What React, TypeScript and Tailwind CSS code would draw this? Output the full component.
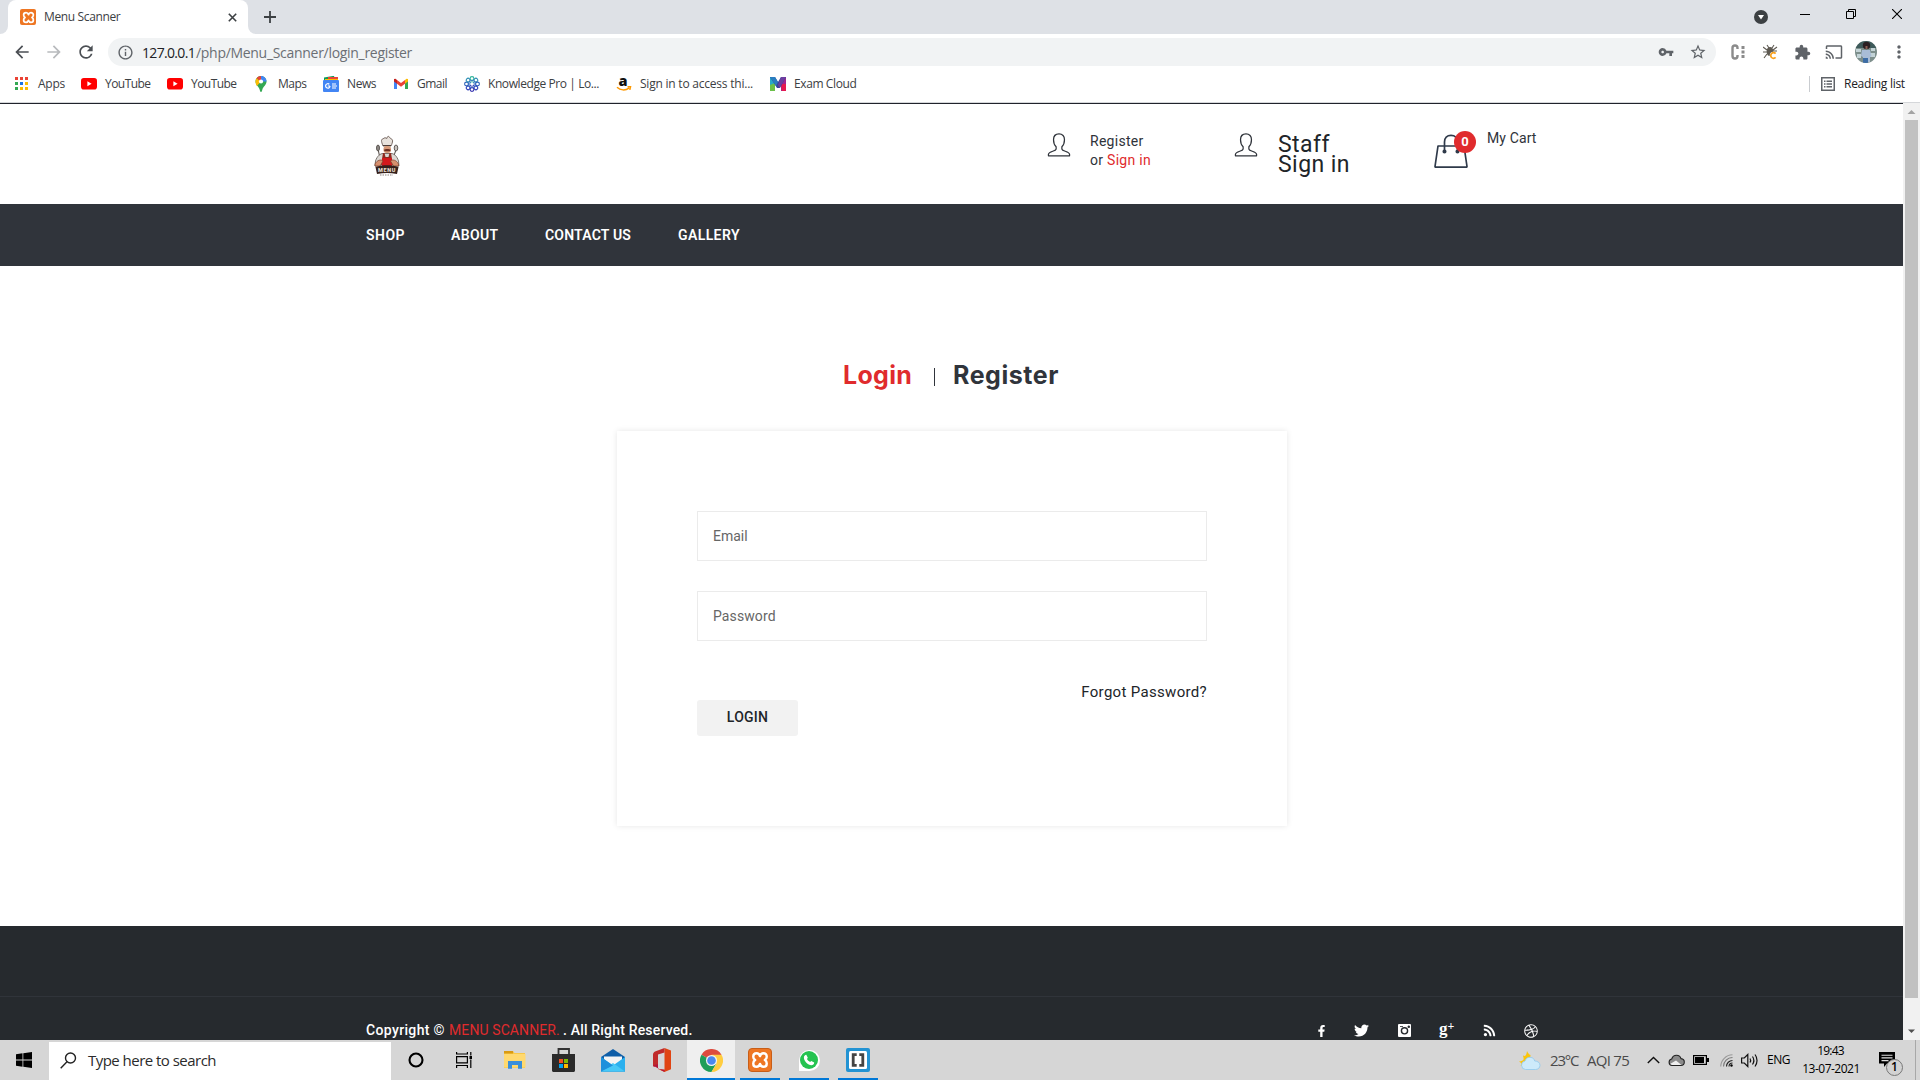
import type { ReactNode } from 'react';
import { FaFacebookF, FaTwitter, FaRss, FaDribbble } from 'react-icons/fa';
import { MdVpnKey, MdStarBorder, MdExtension, MdCast, MdArrowBack, MdArrowForward, MdRefresh, MdInfoOutline, MdMoreVert } from 'react-icons/md';

/* ---------- browser icons ---------- */

function XamppIcon({ className, glyph }: { className: string; glyph: string }) {
  return (
    <span className={`flex shrink-0 items-center justify-center bg-[#ee7623] ${className}`}>
      <svg viewBox="0 0 24 24" className={glyph} fill="none" stroke="#fff" strokeWidth="3.2" strokeLinejoin="round">
        <path d="M12 6.800C11.200 4.200 9.700 3 7.500 3 4.700 3 3 4.900 3 7.500c0 2 .9 3.500 2.600 4.500C3.900 13 3 14.500 3 16.500 3 19.100 4.700 21 7.500 21c2.200 0 3.700-1.200 4.500-3.800.8 2.600 2.300 3.800 4.500 3.800 2.800 0 4.500-1.900 4.500-4.500 0-2-.9-3.500-2.600-4.500C20.100 11 21 9.500 21 7.500 21 4.900 19.300 3 16.500 3c-2.200 0-3.700 1.200-4.500 3.800Z" />
      </svg>
    </span>
  );
}

function AppsIcon() {
  const colors = ['#ea4335', '#ea4335', '#ea4335', '#34a853', '#1a73e8', '#fbbc04', '#34a853', '#fbbc04', '#fbbc04'];
  return (
    <svg width="16" height="16" viewBox="0 0 16 16">
      {colors.map((c, i) => (
        <rect key={i} x={(i % 3) * 5} y={1 + Math.floor(i / 3) * 5} width="3" height="3" fill={c} />
      ))}
    </svg>
  );
}

function YouTubeIcon() {
  return (
    <svg width="16" height="16" viewBox="0 0 16 16">
      <rect y="2" width="16" height="11.500" rx="2.800" fill="#f00" />
      <path d="M6.400 5.300v5l4.200-2.500z" fill="#fff" />
    </svg>
  );
}

function MapsIcon() {
  return (
    <svg width="16" height="16" viewBox="0 0 16 16">
      <path d="M8 0C4.700 0 2.500 2.500 2.500 5.500c0 3.500 3.300 4.800 4.200 8.200.3 1 .4 2.300 1.300 2.300s1-1.300 1.300-2.300c.9-3.400 4.200-4.700 4.200-8.200C13.500 2.500 11.300 0 8 0z" fill="#34a853" />
      <path d="M8 0c3.300 0 5.500 2.500 5.500 5.500L8 5.500z" fill="#4285f4" />
      <path d="M3.600 2.200 8 5.500 3.900 9.900C3 8.600 2.500 7.200 2.500 5.500c0-1.300.4-2.400 1.100-3.300z" fill="#fbbc04" />
      <path d="M3.600 2.200C4.600.8 6.200 0 8 0v5.500z" fill="#ea4335" />
      <circle cx="8" cy="5.500" r="2.100" fill="#fff" />
    </svg>
  );
}

function NewsIcon() {
  return (
    <svg width="16" height="16" viewBox="0 0 16 16">
      <path d="M1 1.500 11-.2l1 5H1z" fill="#0c9d58" />
      <path d="M5 1h10v5H5z" fill="#ea4335" />
      <path d="M2 3h13v3H2z" fill="#fbbc04" />
      <rect y="4" width="16" height="12" rx="1" fill="#4285f4" />
      <path d="M7 10H4.800M7 10a2.200 2.200 0 1 1-.7-1.700M9 8h4M9 10h5M9 12h4" stroke="#fff" strokeWidth="1.200" fill="none" />
    </svg>
  );
}

function GmailIcon() {
  return (
    <svg width="16" height="16" viewBox="0 0 16 16">
      <path d="M1 3.500V13h3V6.500z" fill="#4285f4" />
      <path d="M15 3.500V13h-3V6.500z" fill="#34a853" />
      <path d="M1 3v2.500l3 2.300V4L2.500 2.700z" fill="#c5221f" />
      <path d="M15 3v2.500l-3 2.300V4l1.500-1.300z" fill="#fbbc04" />
      <path d="M4 4 8 7.100 12 4v3.800l-4 3-4-3z" fill="#ea4335" />
    </svg>
  );
}

function KnowledgeIcon() {
  return (
    <svg width="16" height="16" viewBox="0 0 16 16" fill="none" strokeWidth="1.100">
      {[0, 45, 90, 135, 180, 225, 270, 315].map((a, i) => (
        <g key={a} transform={`rotate(${a} 8 8)`} stroke={['#2fb39b', '#2e8fb5', '#2d62bb', '#2c3fb8', '#3531b0', '#2c3fb8', '#2d62bb', '#2e8fb5'][i]}>
          <circle cx="8" cy="2.500" r="1.900" />
          <path d="M8 4.500v2" />
        </g>
      ))}
      <circle cx="8" cy="8" r="3.600" stroke="#3a6fc4" strokeWidth=".8" />
    </svg>
  );
}

function AmazonIcon() {
  return (
    <svg width="16" height="16" viewBox="0 0 16 16">
      <text x="7" y="9.500" textAnchor="middle" fontFamily="Open Sans" fontWeight="800" fontSize="14.500" fill="#111">a</text>
      <path d="M1 11.300c3.500 3.300 8.500 3.300 12 .8M11.500 10.800h3l-.7 3" fill="none" stroke="#f90" strokeWidth="1.500" />
    </svg>
  );
}

function ExamIcon() {
  return (
    <svg width="16" height="16" viewBox="0 0 16 16">
      <path d="M0 1h5v14H0z" fill="#27a9c9" />
      <path d="M0 9 5 7v8H0z" fill="#6cc04a" />
      <path d="M11 1h5v14h-5z" fill="#a3238e" />
      <path d="M11 8h5v7h-4z" fill="#e5194f" />
      <path d="M0 1h5l3 5 3-5h5l-6 11H7z" fill="#34479c" />
      <path d="M0 1h5l3 5-2 4z" fill="#2a7dc0" />
      <path d="M16 1 9.500 12 8 9l3-8z" fill="#6b3fa0" />
    </svg>
  );
}

const bookmarks: { icon: ReactNode; label: string; cls: string }[] = [
  { icon: <AppsIcon />, label: 'Apps', cls: 'w-[28px] ml-[7px] mr-[15px] tracking-[-0.25px]' },
  { icon: <YouTubeIcon />, label: 'YouTube', cls: 'w-[47px] ml-2 mr-[15px] tracking-[-0.55px]' },
  { icon: <YouTubeIcon />, label: 'YouTube', cls: 'w-[47px] ml-2 mr-[15px] tracking-[-0.55px]' },
  { icon: <MapsIcon />, label: 'Maps', cls: 'w-[30px] ml-[9px] mr-[15px] tracking-[-0.5px]' },
  { icon: <NewsIcon />, label: 'News', cls: 'w-[31px] ml-2 mr-[15px] tracking-[-0.4px]' },
  { icon: <GmailIcon />, label: 'Gmail', cls: 'w-[32px] ml-2 mr-[15px] tracking-[-0.5px]' },
  { icon: <KnowledgeIcon />, label: 'Knowledge Pro | Lo...', cls: 'w-[113px] ml-2 mr-[15px] tracking-[-0.42px]' },
  { icon: <AmazonIcon />, label: 'Sign in to access thi...', cls: 'w-[115px] ml-2 mr-[15px] tracking-[-0.22px]' },
  { icon: <ExamIcon />, label: 'Exam Cloud', cls: 'w-[64px] ml-2 tracking-[-0.4px]' },
];

function TabStrip() {
  return (
    <div className="flex h-[34px] shrink-0 bg-[#dee1e6]">
      <div className="flex w-2 items-end bg-white">
        <div className="h-full w-full rounded-br-lg bg-[#dee1e6]" />
      </div>
      <div className="w-[240px] bg-[#dee1e6]">
        <div className="flex h-full items-center rounded-t-lg bg-white pl-3">
          <XamppIcon className="size-4 rounded-[2px]" glyph="size-[13px]" />
          <span className="ml-2 w-[184px] text-[12px] tracking-[-0.36px] text-[#3c4043]">Menu Scanner</span>
          <svg width="9" height="9" viewBox="0 0 9 9" stroke="#3c4043" strokeWidth="1.600"><path d="M.8.8l7.400 7.400M8.200.8.8 8.200" /></svg>
        </div>
      </div>
      <div className="w-2 bg-white">
        <div className="h-full w-full rounded-bl-lg bg-[#dee1e6]" />
      </div>
      <div className="flex items-center pl-2">
        <svg width="12" height="12" viewBox="0 0 12 12" stroke="#3c4043" strokeWidth="1.800"><path d="M6 0v12M0 6h12" /></svg>
      </div>
      <div className="ml-auto flex items-start">
        <svg className="mt-[10px] mr-[32px]" width="14" height="14" viewBox="0 0 14 14"><circle cx="7" cy="7" r="7" fill="#3c4043" /><path d="M4 5h6l-3 4.500z" fill="#fff" /></svg>
        <svg className="mt-[9px] mr-[36px]" width="10" height="11" viewBox="0 0 10 11" stroke="#000"><path d="M0 5.500h10" /></svg>
        <svg className="mt-[9px] mr-[36px]" width="10" height="10" viewBox="0 0 10 10" stroke="#000" fill="none"><path d="M.5 2.500h7v7h-7zM2.500 2.500v-2h7v7h-2" /></svg>
        <svg className="mt-[9px] mr-[18px]" width="10" height="10" viewBox="0 0 10 10" stroke="#000" strokeWidth="1.100"><path d="M0 0l10 10M10 0 0 10" /></svg>
      </div>
    </div>
  );
}

function Toolbar() {
  return (
    <div className="flex h-9 shrink-0 items-center bg-white pl-[12px] text-[#5f6368]">
      <MdArrowBack className="size-[20px] text-[#4b4f54]" />
      <MdArrowForward className="ml-[12px] size-[20px] text-[#b8babd]" />
      <MdRefresh className="ml-[12px] size-[20px] text-[#4b4f54]" />
      <div className="ml-[12px] flex h-7 w-[1608px] items-center rounded-full bg-[#f1f3f4] pr-[9px] pl-[9px] text-[14px]">
        <MdInfoOutline className="size-[17px]" />
        <span className="ml-2 w-[54px] tracking-[-0.67px] text-[#202124]">127.0.0.1</span>
        <span className="tracking-[-0.3px] text-[#6b6f74]">/php/Menu_Scanner/login_register</span>
        <MdVpnKey className="ml-auto size-[16px]" />
        <MdStarBorder className="ml-[15px] size-[18px]" />
      </div>
      <svg className="ml-[14px]" width="15" height="16" viewBox="0 0 15 16">
        <path d="M7.500 5V4a2.500 2.500 0 0 0-5 0v8a2.500 2.500 0 0 0 5 0v-1" fill="none" stroke="#8b8b8b" strokeWidth="2.400" />
        <path d="M11.500 2h3v3h-3zM11.500 6.500h3v3h-3zM11.500 11h3v3h-3z" fill="#8b8b8b" />
      </svg>
      <svg className="ml-[18px]" width="16" height="16" viewBox="0 0 16 16">
        <path d="M4 1l2 3M11 1 9 4M0 3l4 3M14 3l-4 3M0 8h4M1 14l3-4M14 7h-4" stroke="#5e5a52" strokeWidth="1.100" />
        <ellipse cx="7" cy="7.500" rx="3.300" ry="4.500" fill="#5e5a52" />
        <circle cx="10.500" cy="11.500" r="3.800" fill="#fff" />
        <path d="M12.600 9.600a2.800 2.800 0 1 0 0 3.800" fill="none" stroke="#f9a01b" strokeWidth="1.700" />
      </svg>
      <MdExtension className="ml-[15px] size-[17px]" />
      <MdCast className="ml-[14px] size-[18px]" />
      <svg className="ml-[12px]" width="22" height="22" viewBox="0 0 22 22">
        <clipPath id="avatar"><circle cx="11" cy="11" r="11" /></clipPath>
        <g clipPath="url(#avatar)">
          <rect width="22" height="22" fill="#7d8f8c" />
          <path d="M0 0h22v7H0z" fill="#3e5a5a" />
          <path d="M1 8h5v3H1zM2 13h4v4H2zM16 7h4v3h-4zM15 12h5v4h-5z" fill="#c3d3d6" />
          <path d="M7 9h8l1.500 6-1.500 1v5H8v-5l-2-1z" fill="#a9bdd6" />
          <path d="M8 17h5v5H8z" fill="#3d6da5" />
          <circle cx="11.500" cy="4.500" r="3.700" fill="#2b1f22" />
          <path d="M10.500 5h2v3h-2z" fill="#8d5f52" />
        </g>
      </svg>
      <MdMoreVert className="ml-[12px] size-[20px]" />
    </div>
  );
}

function BookmarksBar() {
  return (
    <div className="flex h-8 shrink-0 items-start bg-white pt-1 pl-[15px] text-[12px] leading-5 whitespace-nowrap text-[#3c4043]">
      {bookmarks.map((b, i) => (
        <div key={i} className="flex items-center">
          <span className="flex h-5 w-4 shrink-0 items-center">{b.icon}</span>
          <span className={`block ${b.cls}`}>{b.label}</span>
        </div>
      ))}
      <div className="ml-auto flex h-5 items-center pr-[15px]">
        <div className="h-4 w-px bg-[#c9ccd0]" />
        <svg className="ml-[11px]" width="14" height="14" viewBox="0 0 14 14" fill="none" stroke="#5f6368">
          <rect x=".75" y=".75" width="12.500" height="12.500" strokeWidth="1.500" />
          <path d="M3 4.200h1.500M5.500 4.200H11M3 7h1.500M5.500 7H11M3 9.800h1.500M5.500 9.800H11" strokeWidth="1.400" />
        </svg>
        <span className="ml-[9px] w-[61px] tracking-[-0.28px] text-[#202124]">Reading list</span>
      </div>
    </div>
  );
}

/* ---------- page ---------- */

function ChefLogo() {
  return (
    <svg className="mt-[30px] -ml-px shrink-0" width="40" height="44" viewBox="0 0 40 44">
      <path d="M18 12c-2-5-2-7 0-7 1-1.500 3-1.500 3.800-.5C23-.1 25 4 26 5c2.200 0 2 3 0 7z" fill="#e8e2dc" stroke="#5b4a44" strokeWidth=".8" />
      <path d="M18 11.500h8" stroke="#4a3a35" />
      <rect x="18.500" y="12" width="7.500" height="7" rx="3" fill="#d89a78" />
      <path d="M18.800 16c1.500-1.200 5.500-1.200 7 0l-1 1.300h-5z" fill="#6b2f22" />
      <ellipse cx="13" cy="14" rx="1.500" ry="3" fill="#8f8a86" stroke="#46403c" strokeWidth=".8" />
      <ellipse cx="31" cy="14" rx="1.800" ry="3" fill="#c9c4c0" stroke="#46403c" strokeWidth=".8" />
      <path d="M13.500 17l1.500 8M30.500 17l-2.500 8" stroke="#4b423d" strokeWidth="1" />
      <path d="M10.500 27c1.500-5 5-7.500 7.500-7.500h8c3 0 6 2.500 7.500 7.500l.5 5H10z" fill="#dcd8d4" stroke="#5d5550" strokeWidth=".8" />
      <path d="M18 19h1.500l1 4h3l1-4H26l2 12H16z" fill="#8f2a1f" />
      <path d="M17 24h10v8H17z" fill="#d3191c" />
      <path d="M10 30c2-4 6-5 8-3l-3 5h-5zM33.500 30c-2-4-6-5-8-3l3 5h5z" fill="#d6906e" stroke="#7a3f2c" strokeWidth=".7" />
      <path d="M10.500 33c7-2.500 16-2.500 23 0l-1.500 7c-7-1.500-13-1.500-20 0z" fill="#35201b" />
      <text x="22" y="37.800" textAnchor="middle" fontFamily="Roboto" fontWeight="900" fontSize="5.500" letterSpacing=".6" fill="#e8dfd0">MENU</text>
      <path d="M15 41h13" stroke="#8b8582" strokeWidth="1" strokeDasharray="1.500 1" />
    </svg>
  );
}

function UserIcon() {
  return (
    <svg width="24" height="24" viewBox="0 0 24 25" fill="none" stroke="#2f333a" strokeWidth="1.300" strokeLinejoin="round">
      <path d="M12 1C8.300 1 6.300 3.400 6.300 7c0 3.200 1.100 5.800 2.700 7.300v2.400c-.2 1-1.700 1.700-3.500 2.300C2.600 20 1 20.600 1 22.200v1.600h22v-1.600c0-1.600-1.600-2.200-4.500-3.200-1.800-.6-3.300-1.300-3.500-2.300v-2.400c1.600-1.500 2.700-4.100 2.700-7.300C17.700 3.400 15.700 1 12 1z" />
    </svg>
  );
}

function SiteHeader() {
  return (
    <header className="flex h-[100px] shrink-0 items-start pl-[366px] text-[14px] whitespace-nowrap text-[#2f333a]">
      <ChefLogo />
      <div className="ml-[642px] flex pt-[29px]">
        <UserIcon />
        <div className="ml-[19px] w-[145px] leading-[19px] tracking-[0.28px]">
          <div className="-mt-px">Register</div>
          <div>or <span className="text-[#e02b2d]">Sign in</span></div>
        </div>
      </div>
      <div className="flex pt-[29px]">
        <span className="-ml-[1px]"><UserIcon /></span>
        <div className="ml-[20px] w-[156px] pt-[2px] text-[23px] leading-5 tracking-[0.45px] text-[#212529]">
          <div>Staff</div>
          <div>Sign in</div>
        </div>
      </div>
      <div className="relative mt-[30px]">
        <svg width="34" height="34" viewBox="0 0 34 34" fill="none" stroke="#2f3a4a" strokeWidth="1.700" strokeLinejoin="round">
          <path d="M4 12h26l3 20.500c0 .4-.2.700-.7.700H1.700c-.5 0-.7-.3-.7-.7z" />
          <path d="M10.500 17V8c0-4 2.500-6.700 6.500-6.700S23.500 4 23.500 8v9" />
          <circle cx="10.500" cy="17.500" r="1.200" fill="#2f3a4a" />
          <circle cx="23.500" cy="17.500" r="1.200" fill="#2f3a4a" />
        </svg>
        <span className="absolute top-[-3px] left-5 flex size-[22px] items-center justify-center rounded-full bg-[#e02b2d] text-[13px] font-bold text-white">0</span>
      </div>
      <span className="mt-[24px] ml-[19px] leading-5 tracking-[0.12px]">My Cart</span>
    </header>
  );
}

function SiteNav() {
  return (
    <nav className="flex h-[62px] shrink-0 items-center bg-[#30343b] pl-[366px] text-[14px] font-semibold whitespace-nowrap text-white">
      <span className="w-[85px] tracking-[0.5px]">SHOP</span>
      <span className="w-[94px] tracking-[0.35px]">ABOUT</span>
      <span className="w-[133px] tracking-[0.2px]">CONTACT US</span>
      <span className="tracking-[0.4px]">GALLERY</span>
    </nav>
  );
}

function LoginSection() {
  return (
    <main className="flex h-[660px] shrink-0 flex-col items-start bg-white pt-[94px] pl-[617px] whitespace-nowrap">
      <div className="flex h-8 items-center pl-[226px] font-['Inter',sans-serif] text-[25px] font-bold">
        <span className="w-[91px] tracking-[0.3px] text-[#e02b2d]">Login</span>
        <span className="mt-px h-[18px] w-px bg-[#30343b]" />
        <span className="ml-[18px] tracking-[0.55px] text-[#30343b]">Register</span>
      </div>
      <form className="mt-[39px] flex h-[395px] w-[670px] flex-col bg-white px-20 pt-20 shadow-[0_0_6px_rgba(0,0,0,0.1)]">
        <input className="h-[50px] border border-[#ebebeb] px-[15px] text-[14px] placeholder:text-[#666666]" placeholder="Email" />
        <input className="mt-[30px] h-[50px] border border-[#ebebeb] px-[15px] text-[14px] tracking-[0.1px] placeholder:text-[#666666]" placeholder="Password" type="password" />
        <div className="mt-[41px] flex justify-between">
          <button type="button" className="mt-[18px] h-9 w-[101px] rounded-[3px] bg-[#f2f2f2] text-[14px] font-medium tracking-[0.25px] text-[#212529]"><span className="block pb-px">LOGIN</span></button>
          <span className="text-[15px] leading-[21px] tracking-[0.32px] text-[#212529]">Forgot Password?</span>
        </div>
      </form>
    </main>
  );
}

function SiteFooter() {
  return (
    <footer className="flex min-h-0 flex-1 flex-col bg-[#262a2e] whitespace-nowrap text-white">
      <div className="h-[71px] shrink-0 border-b border-[#30343a]" />
      <div className="flex pt-[24px] pl-[366px] text-[14px] leading-[18px]">
        <span className="w-[83px] font-medium tracking-[0.35px]">Copyright ©</span>
        <span className="w-[114px] tracking-[0.1px] text-[#e02b2d]">MENU SCANNER.</span>
        <span className="w-[129px] font-medium tracking-[0.18px]">. All Right Reserved.</span>
        <div className="ml-[625px] flex h-[19px] items-center">
          <FaFacebookF className="h-[12px] w-[9px]" />
          <FaTwitter className="ml-[28px] size-[15px]" />
          <svg className="ml-[29px]" width="13" height="13" viewBox="0 0 13 13">
            <rect width="13" height="13" rx="1" fill="#fff" />
            <circle cx="6.500" cy="6.800" r="3.100" fill="none" stroke="#262a2e" strokeWidth="1.400" />
            <path d="M2 2.500h3M10 2h1.500v1.500H10z" stroke="#262a2e" strokeWidth=".8" fill="#262a2e" />
          </svg>
          <span className="-mt-[4px] ml-[28px] flex h-[12px] w-[16px] items-center font-['Liberation_Serif'] text-[17px] leading-3 font-bold">g<span className="mb-[6px] text-[12px]">+</span></span>
          <FaRss className="ml-[28px] size-[13px]" />
          <FaDribbble className="ml-[28px] size-[14px]" />
        </div>
      </div>
    </footer>
  );
}

function Scrollbar() {
  return (
    <div className="flex w-[17px] shrink-0 flex-col items-center bg-[#f1f1f1]">
      <svg className="h-[17px]" width="17" height="17" viewBox="0 0 17 17"><path d="M4.500 11h8l-4-4z" fill="#a3a3a3" /></svg>
      <div className="h-[878px] w-[13px] bg-[#c1c1c1]" />
      <svg className="mt-auto h-[17px]" width="17" height="17" viewBox="0 0 17 17"><path d="M5 6.500h7L8.500 10z" fill="#505050" /></svg>
    </div>
  );
}

/* ---------- taskbar ---------- */

function TaskApp({ children, cls }: { children: ReactNode; cls: string }) {
  return (
    <div className={`flex h-10 flex-col items-center ${cls}`}>
      <div className="flex h-[38px] items-center pt-[2px]">{children}</div>
      <div className="h-[2px] w-full bg-[#0078d7]" />
    </div>
  );
}

function Taskbar() {
  return (
    <div className="flex h-10 shrink-0 items-center bg-[#d6d6d6] text-black">
      <svg className="ml-4" width="16" height="16" viewBox="0 0 16 16"><path d="M0 2.300 6.500 1.300v6.300H0zM7.300 1.200 16 0v7.600H7.300zM0 8.400h6.500v6.300L0 13.700zM7.300 8.400H16V16l-8.700-1.200z" /></svg>
      <div className="mt-px ml-[17px] flex h-[38px] w-[342px] items-center bg-white pl-[11px]">
        <svg width="17" height="17" viewBox="0 0 17 17" fill="none" stroke="#222" strokeWidth="1.400"><circle cx="10.500" cy="6" r="5" /><path d="M7 9.800.7 16.300" /></svg>
        <span className="ml-[11px] text-[15px] tracking-[-0.53px] whitespace-nowrap text-[#2b2b2b]">Type here to search</span>
      </div>
      <svg className="ml-[17px]" width="16" height="16" viewBox="0 0 16 16"><circle cx="8" cy="8" r="6.500" fill="none" stroke="#000" strokeWidth="2.100" /></svg>
      <svg className="ml-[32px]" width="17" height="16" viewBox="0 0 17 16" fill="none" stroke="#000" strokeWidth="1.200"><path d="M.6 0v2h10.800V0M.6 16v-2.500h10.800V16M.6 4.600h10.800v6.300H.6zM14.800 0v3.500M14.800 7.500V16" /><path d="M13.500 4h2.500v3h-2.500z" fill="#000" stroke="none" /></svg>
      <svg className="ml-[31px]" width="22" height="20" viewBox="0 0 22 20"><path d="M0 1h9l1.500 2H21v15H0z" fill="#f8c747" /><path d="M0 1h9v2.500H0z" fill="#d99a12" /><path d="M0 4h21.500v13.500H0z" fill="#ffd970" /><path d="M4 18.800V11h14v7.800h-4V15H8v3.800z" fill="#3a8fdb" /></svg>
      <svg className="mb-px ml-[26px]" width="23" height="24" viewBox="0 0 23 24"><path d="M6.500 7V1h10.500v6" fill="none" stroke="#333" strokeWidth="1.800" /><path d="M0 6h23v16.500c0 .8-.7 1.500-1.500 1.500h-20C.7 24 0 23.300 0 22.500z" fill="#2b2b2b" /><path d="M7 11h4v4H7z" fill="#f25022" /><path d="M12 11h4v4h-4z" fill="#7fba00" /><path d="M7 16h4v4H7z" fill="#00a4ef" /><path d="M12 16h4v4h-4z" fill="#ffb900" /></svg>
      <svg className="ml-[26px]" width="24" height="23" viewBox="0 0 24 23"><path d="M0 8 12 0l12 8v14.500H0z" fill="#0f5ea8" /><path d="M3 7.500h18V16H3z" fill="#f4f4f4" /><path d="M0 8l12 8.500L24 8v14.500H0z" fill="#2bb0ee" /><path d="M0 22.500 12 14l12 8.500z" fill="#47c8f7" /><path d="M0 8l12 8.500L0 22.500z" fill="#1e90dc" /></svg>
      <svg className="ml-[27px]" width="20" height="24" viewBox="0 0 20 24"><path d="M12.500 0 19 2.500v18.800L12.500 24 6 21l6.500.8V4z" fill="#e04412" /><path d="M12.500 0v4.500L6 6.500v10.300L2 19 1 18V6.500C1 5 2 4 3 3.500z" fill="#c02a2a" /><path d="M1 17.500 6 16v5l6.500.8V24z" fill="#b5153a" /></svg>
      <TaskApp cls="ml-[15px] w-12 bg-[#efefef]">
        <svg width="23" height="23" viewBox="0 0 24 24"><path d="M12 12 1.600 6A12 12 0 0 1 22.400 6z" fill="#dd4b3e" /><path d="M12 12 1.600 6A12 12 0 0 0 12 24l5.200-9z" fill="#1e9e58" /><path d="M12 6h10.400A12 12 0 0 1 12 24l5.200-9z" fill="#ffcd40" /><circle cx="12" cy="12" r="5.800" fill="#f3f3f3" /><circle cx="12" cy="12" r="4.500" fill="#4a88ee" /></svg>
      </TaskApp>
      <TaskApp cls="ml-[5px] w-10"><XamppIcon className="size-6 rounded-[4px] border border-[#c85e18]" glyph="size-[18px]" /></TaskApp>
      <TaskApp cls="ml-[9px] w-10">
        <span className="flex size-[21px] items-center justify-center rounded-full rounded-bl-[4px] bg-white">
          <span className="flex size-[18px] items-center justify-center rounded-full bg-[#25c350]"><svg width="12" height="12" viewBox="0 0 12 12"><path d="M3.300.8 4.800 3.800 4 5c.7 1.300 1.700 2.200 3.100 2.900L8.200 7l3 1.500c0 1.700-1.400 2.700-2.800 2.700C5 11.200.9 7.300.9 3.600.9 2.200 1.800 1 3.300.8z" fill="#fff" /></svg></span>
        </span>
      </TaskApp>
      <TaskApp cls="ml-[9px] w-10">
        <svg width="24" height="24" viewBox="0 0 24 24"><rect width="24" height="24" rx="2" fill="#2393d3" /><rect x="3" y="3" width="18" height="18" rx="1.500" fill="#fff" /><path d="M10.700 6.700H7.200v10.600h3.500M13.300 6.700h3.500v10.600h-3.500" fill="none" stroke="#444" strokeWidth="2.800" /></svg>
      </TaskApp>
      <Tray />
    </div>
  );
}

function Tray() {
  return (
    <div className="ml-auto flex h-10 items-center whitespace-nowrap">
      <svg width="22" height="19" viewBox="0 0 22 19"><path d="M8 0c1 2 2 3.500 3.500 4L11 9l-7 6-2.500-.5C3 13 2.500 12 0 10.500c2.500-.3 4-.7 4.500-2C5 7 4 6 4 4.500c2 1 3.500.5 4-4.500z" fill="#fbc50c" /><path d="M6.500 18.500A4.300 4.300 0 0 1 6 10c.8-3 3.500-4.200 6-3.600 2 .4 3.400 1.800 3.700 3.600 3 0 5.300 1.700 5.300 4.300 0 2.500-2 4.200-4.500 4.200z" fill="#cdeafa" stroke="#8fc9ee" strokeWidth=".8" /></svg>
      <span className="ml-[9px] w-[37px] text-[15px] tracking-[-1.2px] text-[#4a4a4a]">23°C</span>
      <span className="w-[60px] text-[15px] tracking-[-0.73px] text-[#4a4a4a]">AQI 75</span>
      <svg width="13" height="8" viewBox="0 0 13 8" fill="none" stroke="#111" strokeWidth="1.400"><path d="m.8 7 5.700-5.600L12.200 7" /></svg>
      <svg className="ml-[8px]" width="17" height="13" viewBox="0 0 17 13"><path d="M4 11.500a3.300 3.300 0 0 1-.3-6.500C4.500 2.500 6.300 1.200 8.500 1.200c2.300 0 4 1.300 4.500 3.400 2 .2 3.300 1.500 3.300 3.400 0 2-1.400 3.500-3.500 3.500z" fill="#8b8b8b" stroke="#222" strokeWidth="1.100" /><path d="m2 10 6-3.500 5.500 4.500H4z" fill="#efefef" /></svg>
      <svg className="ml-[8px]" width="16" height="10" viewBox="0 0 16 10"><rect x=".6" y=".6" width="12.800" height="8.800" fill="none" stroke="#000" strokeWidth="1.200" /><path d="M2 2h9v6H2zM14 3h2v4h-2z" /></svg>
      <svg className="ml-[11px]" width="13" height="13" viewBox="0 0 13 13" fill="none" strokeWidth="1.100"><path d="M.7 12.500A12 12 0 0 1 12.500.8" stroke="#999" /><path d="M3.500 12.500a9 9 0 0 1 9-9" stroke="#777" /><path d="M6.500 12.500a6 6 0 0 1 6-6M9 12.500A3.600 3.600 0 0 1 12.500 9" stroke="#222" /><circle cx="11.500" cy="11.500" r="1.200" fill="#000" /></svg>
      <svg className="ml-[8px]" width="17" height="15" viewBox="0 0 17 15" fill="none" stroke="#111" strokeWidth="1.200"><path d="M.6 5h2.700L6.800 1.500v12L3.300 10H.6zM9 5.500c.8 1.200.8 2.800 0 4M11.500 3.500c1.700 2.500 1.700 5.500 0 8M14 1.500c2.700 3.500 2.700 8.500 0 12" /></svg>
      <span className="ml-[9px] w-[34px] text-[12px] tracking-[-0.45px]">ENG</span>
      <div className="flex w-[60px] flex-col items-center text-[12px] leading-[18px] tracking-[-0.5px]">
        <span className="pr-px tracking-[-0.85px]">19:43</span>
        <span>13-07-2021</span>
      </div>
      <div className="relative mb-[2px] ml-[18px]">
        <svg width="16" height="15" viewBox="0 0 16 15"><path d="M0 0h16v11.500H8L5 15v-3.500H0z" /><path d="M2.500 3.200h11M2.500 5.900h11M2.500 8.600h7" stroke="#ddd" strokeWidth="1.100" /></svg>
        <span className="absolute top-[7px] left-[7px] flex size-[17px] items-center justify-center rounded-full border border-[#777] bg-[#d2d2d2] text-[12px] font-semibold">1</span>
      </div>
      <div className="mr-[4px] ml-[20px] h-10 w-px bg-[#a8a8a8]" />
    </div>
  );
}

export default function App() {
  return (
    <div className="flex h-[1080px] w-[1920px] flex-col overflow-hidden bg-white font-['Open_Sans',sans-serif]">
      <TabStrip />
      <Toolbar />
      <BookmarksBar />
      <div className="flex min-h-0 flex-1 border-t border-[#d5d7da]">
        <div className="flex min-w-0 flex-1 flex-col border-t border-[#20232b] font-['Roboto',sans-serif]">
          <SiteHeader />
          <SiteNav />
          <LoginSection />
          <SiteFooter />
        </div>
        <Scrollbar />
      </div>
      <Taskbar />
    </div>
  );
}
